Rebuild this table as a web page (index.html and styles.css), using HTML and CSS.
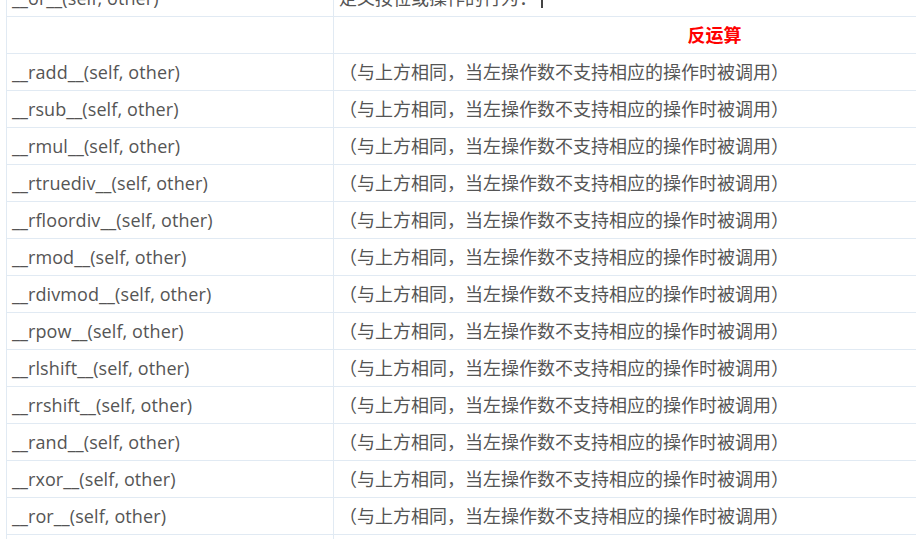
FILE: index.html
```html
<!DOCTYPE html>
<html lang="zh-CN">
<head>
<meta charset="utf-8">
<link rel="stylesheet" href="styles.css">
</head>
<body>
<table class="ops">
  <colgroup><col class="c-name"><col class="c-desc"></colgroup>
  <tbody>
    <tr><td>__or__(self, other)</td><td>定义按位或操作的行为：<span class="bar">|</span></td></tr>
    <tr><td></td><td class="section">反运算</td></tr>
    <tr><td>__radd__(self, other)</td><td>（与上方相同，当左操作数不支持相应的操作时被调用）</td></tr>
    <tr><td>__rsub__(self, other)</td><td>（与上方相同，当左操作数不支持相应的操作时被调用）</td></tr>
    <tr><td>__rmul__(self, other)</td><td>（与上方相同，当左操作数不支持相应的操作时被调用）</td></tr>
    <tr><td>__rtruediv__(self, other)</td><td>（与上方相同，当左操作数不支持相应的操作时被调用）</td></tr>
    <tr><td>__rfloordiv__(self, other)</td><td>（与上方相同，当左操作数不支持相应的操作时被调用）</td></tr>
    <tr><td>__rmod__(self, other)</td><td>（与上方相同，当左操作数不支持相应的操作时被调用）</td></tr>
    <tr><td>__rdivmod__(self, other)</td><td>（与上方相同，当左操作数不支持相应的操作时被调用）</td></tr>
    <tr><td>__rpow__(self, other)</td><td>（与上方相同，当左操作数不支持相应的操作时被调用）</td></tr>
    <tr><td>__rlshift__(self, other)</td><td>（与上方相同，当左操作数不支持相应的操作时被调用）</td></tr>
    <tr><td>__rrshift__(self, other)</td><td>（与上方相同，当左操作数不支持相应的操作时被调用）</td></tr>
    <tr><td>__rand__(self, other)</td><td>（与上方相同，当左操作数不支持相应的操作时被调用）</td></tr>
    <tr><td>__rxor__(self, other)</td><td>（与上方相同，当左操作数不支持相应的操作时被调用）</td></tr>
    <tr><td>__ror__(self, other)</td><td>（与上方相同，当左操作数不支持相应的操作时被调用）</td></tr>
    <tr><td></td><td></td></tr>
  </tbody>
</table>
</body>
</html>
```
FILE: styles.css
```css
html, body {
  margin: 0;
  padding: 0;
  background: #fff;
  overflow: hidden;
}
body {
  font-family: "Open Sans", "Noto Sans CJK SC", sans-serif;
  font-size: 18px;
  color: #555;
}
.ops {
  border-collapse: collapse;
  table-layout: fixed;
  width: 1090px;
  margin: -21px 0 0 6px;
}
.c-name { width: 327px; }
.ops td {
  border: 1px solid #e1eaf3;
  height: 36px;
  padding: 0 5px;
  vertical-align: middle;
  white-space: nowrap;
  line-height: 20px;
}
.ops td:first-child {
  letter-spacing: 0.1px;
}
.ops td.section {
  text-align: center;
  color: #f00;
  font-weight: bold;
}
.bar {
  display: inline-block;
  margin-left: 4px;
  width: 2px;
  height: 16px;
  background: #444;
  color: transparent;
  overflow: hidden;
  vertical-align: middle;
}
```
